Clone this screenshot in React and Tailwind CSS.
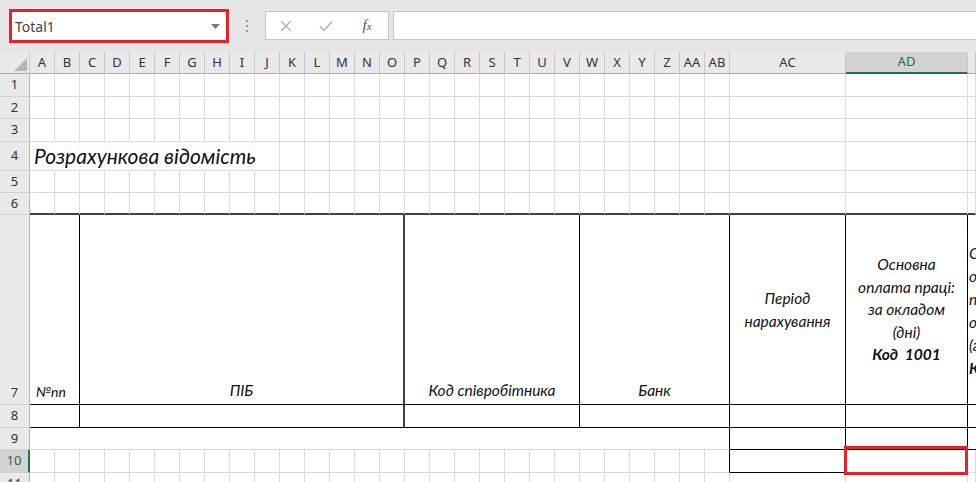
import React from 'react'

// Excel-подібний аркуш "Розрахункова відомість"

const narrow = [...'ABCDEFGHIJKLMNOPQRSTUVWXYZ', 'AA', 'AB']
const allCols = [...narrow, 'AC', 'AD', 'AE']

const ui = "font-['Noto_Sans',sans-serif]"
const cellFont = "font-['Lato','Noto_Sans',sans-serif] italic text-[15.5px] text-[#111]"
const grid = 'border-r border-b border-[#dadada]'

function RowHead({ n, selected, bottom }) {
  return (
    <div
      className={`flex justify-center border-b border-b-[#d0d0d0] text-[13px] ${ui} ${
        bottom ? 'items-end pb-[2px]' : 'items-center'
      } ${
        selected
          ? 'bg-[#d3d3d3] text-[#1e6e42] border-r-2 border-r-[#217346]'
          : 'bg-[#e9e9e9] text-[#333] border-r border-r-[#b8b8b8]'
      }`}
    >
      {n}
    </div>
  )
}

function BlankRow({ n, last }) {
  return (
    <>
      <RowHead n={n} />
      {allCols.map((c) => (
        <div
          key={c}
          className={last ? 'border-r border-b-2 border-r-[#dadada] border-b-[#404040]' : grid}
        />
      ))}
    </>
  )
}

export default function App() {
  return (
    <div className="w-[976px] h-[482px] overflow-hidden bg-white">
      {/* Рядок імені та формул */}
      <div className="h-[52px] bg-[#e6e6e6] flex items-start pt-[9px] pl-[9px]">
        <div className="w-[220px] h-[34px] border-[3px] border-[#e8202a] bg-white flex items-center justify-between pl-[3px] pr-[6px]">
          <span className={`${ui} text-[14px] text-[#444]`}>Total1</span>
          <svg width="9" height="5" viewBox="0 0 9 5">
            <polygon points="0,0 9,0 4.5,5" fill="#777" />
          </svg>
        </div>
        <div className="w-[36px] flex flex-col items-center gap-[3px] pt-[11px]">
          <span className="w-[2px] h-[2px] bg-[#9a9a9a]" />
          <span className="w-[2px] h-[2px] bg-[#9a9a9a]" />
          <span className="w-[2px] h-[2px] bg-[#9a9a9a]" />
        </div>
        <div className="mt-[2px] w-[124px] h-[29px] bg-white border border-[#c6c6c6] flex items-center">
          <div className="w-[40px] flex justify-center">
            <svg width="12" height="12" viewBox="0 0 12 12">
              <path d="M1 1 L11 11 M11 1 L1 11" stroke="#b0b0b0" strokeWidth="1.3" />
            </svg>
          </div>
          <div className="w-[40px] flex justify-center">
            <svg width="14" height="12" viewBox="0 0 14 12">
              <path d="M1 6.5 L5 10.5 L13 1.5" stroke="#b0b0b0" strokeWidth="1.5" fill="none" />
            </svg>
          </div>
          <div className="w-[42px] flex justify-center">
            <span className="font-['Liberation_Serif',serif] italic text-[15px] text-[#555] leading-none">
              f<span className="text-[11px]">x</span>
            </span>
          </div>
        </div>
        <div className="ml-[4px] mt-[2px] flex-1 h-[29px] bg-white border border-[#c6c6c6] border-r-0" />
      </div>

      {/* Аркуш */}
      <div className="grid grid-cols-[30px_repeat(28,25px)_116px_122px_1fr] grid-rows-[22px_23px_22px_23px_29px_22px_22px_190px_23px_22px_23px_23px]">
        {/* заголовки стовпців */}
        <div className="bg-[#e9e9e9] border-r border-b border-r-[#c8c8c8] border-b-[#ababab] flex items-end justify-end pr-[2px] pb-[2px]">
          <svg width="13" height="13" viewBox="0 0 13 13">
            <polygon points="13,0 13,13 0,13" fill="#b5b5b5" />
          </svg>
        </div>
        {allCols.map((c) =>
          c === 'AD' ? (
            <div
              key={c}
              className={`bg-[#d3d3d3] border-r border-r-[#c8c8c8] border-b-2 border-b-[#217346] flex items-center justify-center text-[13px] text-[#1e6e42] ${ui}`}
            >
              {c}
            </div>
          ) : (
            <div
              key={c}
              className={`bg-[#e9e9e9] border-r border-b border-r-[#c8c8c8] border-b-[#ababab] flex items-center justify-center text-[13px] text-[#333] ${ui}`}
            >
              {c === 'AE' ? '' : c}
            </div>
          )
        )}

        <BlankRow n={1} />
        <BlankRow n={2} />
        <BlankRow n={3} />

        {/* рядок 4 — назва */}
        <RowHead n={4} />
        <div className={`col-span-10 ${grid} flex items-end pl-[4px] pb-[1px] overflow-visible`}>
          <span className="font-['Lato','Noto_Sans',sans-serif] italic text-[21px] text-[#111] whitespace-nowrap leading-[26px]">
            Розрахункова відомість
          </span>
        </div>
        {allCols.slice(10).map((c) => (
          <div key={c} className={grid} />
        ))}

        <BlankRow n={5} />
        <BlankRow n={6} last />

        {/* рядок 7 — шапка таблиці */}
        <RowHead n={7} bottom />
        <div className={`col-span-2 border-r border-b border-black flex items-end pl-[6px] pb-[2px] ${cellFont}`}>
          <span className="text-[14px]">№пп</span>
        </div>
        <div className={`col-span-13 border-r-2 border-b border-r-[#404040] border-b-black flex items-end justify-center pb-[2px] ${cellFont}`}>
          ПІБ
        </div>
        <div className={`col-span-7 border-r border-b border-black flex items-end justify-center pb-[2px] ${cellFont}`}>
          Код співробітника
        </div>
        <div className={`col-span-6 border-r border-b border-black flex items-end justify-center pb-[2px] ${cellFont}`}>
          Банк
        </div>
        <div className={`border-r border-b border-black flex items-center justify-center text-center leading-[22.5px] ${cellFont}`}>
          Період
          <br />
          нарахування
        </div>
        <div className={`border-r border-b border-black flex flex-col items-center justify-center text-center leading-[22.5px] ${cellFont}`}>
          <span>Основна</span>
          <span className="whitespace-nowrap">оплата праці:</span>
          <span>за окладом</span>
          <span>(дні)</span>
          <span className="font-bold whitespace-pre">Код  1001</span>
        </div>
        <div className={`border-b border-black overflow-hidden flex flex-col justify-center pl-[1px] pt-[2px] leading-[23px] whitespace-nowrap ${cellFont}`}>
          <span>Основна</span>
          <span>оплата</span>
          <span>праці:</span>
          <span>оплата</span>
          <span>(години)</span>
          <span className="font-bold">Код 1002</span>
        </div>

        {/* рядок 8 */}
        <RowHead n={8} />
        <div className="col-span-2 border-r border-b border-black" />
        <div className="col-span-13 border-r-2 border-b border-r-[#404040] border-b-black" />
        <div className="col-span-7 border-r border-b border-black" />
        <div className="col-span-6 border-r border-b border-black" />
        <div className="border-r border-b border-black" />
        <div className="border-r border-b border-black" />
        <div className="border-b border-black" />

        {/* рядок 9 */}
        <RowHead n={9} />
        <div className="col-span-28 border-r border-b border-r-black border-b-[#dadada]" />
        <div className="border-r border-b border-black" />
        <div className="border-r border-b border-black" />
        <div className="border-b border-black" />

        {/* рядок 10 — активна клітинка AD10 */}
        <RowHead n={10} selected />
        {narrow.map((c) => (
          <div
            key={c}
            className={c === 'AB' ? 'border-r border-b border-r-black border-b-[#dadada]' : grid}
          />
        ))}
        <div className="border-r border-b border-black" />
        <div className={`${grid} relative`}>
          <div className="absolute -left-[2px] -right-[1px] -top-[4px] -bottom-[3px] border-[3px] border-[#e8202a]" />
        </div>
        <div className={grid} />

        <BlankRow n={11} />
      </div>
    </div>
  )
}
